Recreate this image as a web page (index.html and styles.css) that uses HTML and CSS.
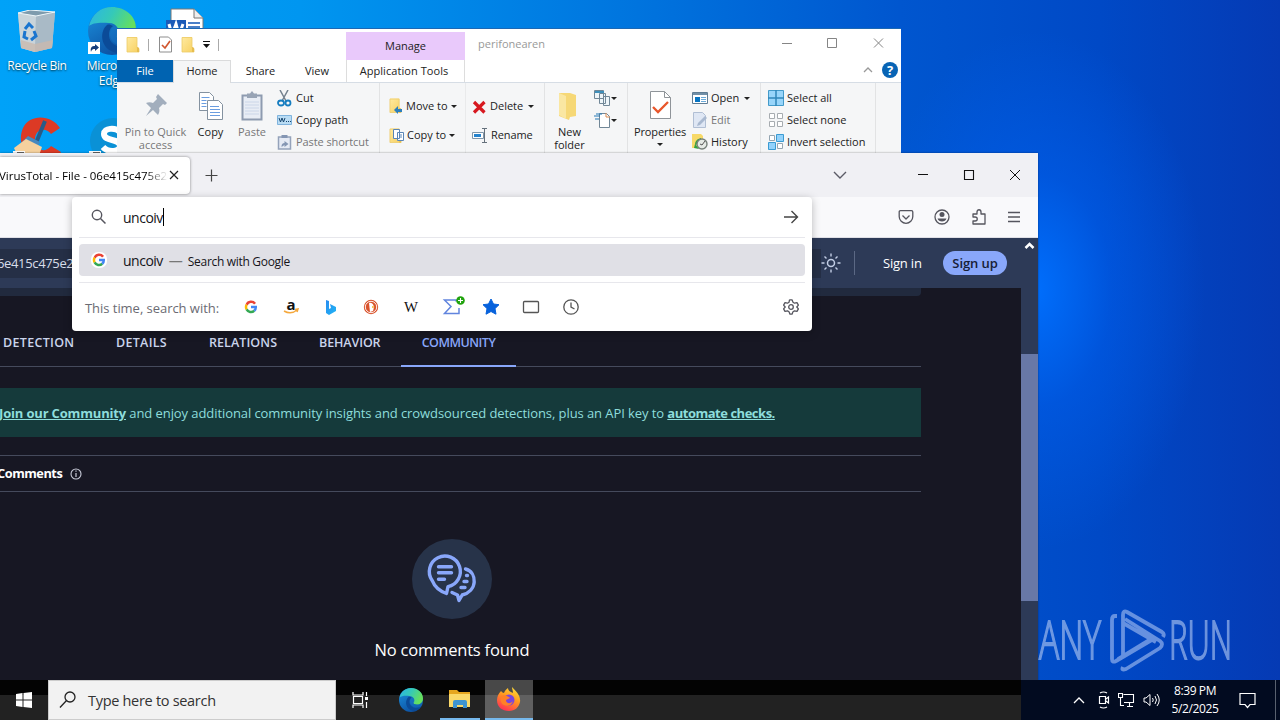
FILE: index.html
```html
<!DOCTYPE html>
<html lang="en">
<head>
<meta charset="utf-8">
<title>Desktop</title>
<link rel="stylesheet" href="styles.css">
</head>
<body>
<svg width="0" height="0" class="defs">
  <defs>
    <linearGradient id="eg1" x1="0" y1="0" x2="1" y2="0.4"><stop offset="0" stop-color="#2bb5e8"/><stop offset=".5" stop-color="#35c9b8"/><stop offset="1" stop-color="#66e05c"/></linearGradient>
    <linearGradient id="eg2" x1="0" y1="0" x2="0.6" y2="1"><stop offset="0" stop-color="#1c93e0"/><stop offset="1" stop-color="#0c4fa0"/></linearGradient>
    <linearGradient id="ff" x1=".8" y1="0" x2=".3" y2="1"><stop offset="0" stop-color="#ffe23a"/><stop offset=".45" stop-color="#ff9a1f"/><stop offset="1" stop-color="#ff2e56"/></linearGradient>
    <linearGradient id="fold" x1="0" y1="0" x2="1" y2="1"><stop offset="0" stop-color="#ffeaa0"/><stop offset="1" stop-color="#f7d060"/></linearGradient>
    <linearGradient id="bing" x1="0" y1="0" x2="1" y2="1"><stop offset="0" stop-color="#2a8cf0"/><stop offset="1" stop-color="#1fb5f5"/></linearGradient>
    <symbol id="edge" viewBox="0 0 48 48">
      <circle cx="24" cy="24" r="24" fill="url(#eg2)"/>
      <path d="M1 19C4 7 13 0 24 0c13 0 24 9 24 21 0 8-6 12-12 12-5 0-8-2-7-4 4-5 0-13-8-13C12 15 4 16 1 19Z" fill="url(#eg1)"/>
      <path d="M19 18c-7 6-7 20 4 26 8 4 16 1 21-6-10 5-22 1-23-9-.4-4 1-8 4-10-2-1-4-2-6-1Z" fill="#0b4b98"/>
      <path d="M27 19c5 3 5 8 2 11-2 2 3 4 7 3 7 0 10-3 12-6 0 4-1 7-3 10-10 5-22 1-23-9 0-4 2-8 5-9Z" fill="#1a7fd0" opacity=".35"/>
    </symbol>
    <symbol id="google" viewBox="0 0 16 16">
      <g fill="none" stroke-width="2.8"><path d="M12.6 4.2A5.6 5.6 0 0 0 3 5.3" stroke="#ea4335"/><path d="M3 5.3a5.6 5.6 0 0 0 0 5.4" stroke="#fbbc05"/><path d="M3 10.7a5.6 5.6 0 0 0 8.7 1.6" stroke="#34a853"/><path d="M11.7 12.3A5.5 5.5 0 0 0 13.5 8H8" stroke="#4285f4"/></g>
    </symbol>
    <symbol id="folder" viewBox="0 0 14 16"><path d="M1 0h10v10l2 1v4H1z" fill="url(#fold)"/><path d="M1 .5h10V11l2 .5V15H1z" fill="none" stroke="#eccb68" stroke-width=".8"/><path d="M11 10v5h2v-4z" fill="#e6bd4f"/></symbol>
  </defs>
</svg>
<main class="desktop">
  <section class="shortcuts">
    <div class="shortcut s1">
      <svg width="40" height="44" viewBox="0 0 40 44"><path d="M1 3 13 0l25 2-3 36-17 4-14-4z" fill="#b5c4ce"/><path d="M1 3 19 6l-1 36-14-4z" fill="#c9d4da"/><path d="m19 6 19-4-3 36-17 4z" fill="#a9bac6"/><path d="M1 3 13 0l25 2-19 4z" fill="#7e9bad" stroke="#eef6fa"/><path d="m4 30 14 4 18-4-1 8-17 4-14-4z" fill="#c9b9ae" opacity=".8"/><g fill="none" stroke="#1a75cf" stroke-width="3"><path d="m8 19 4-5 4 4M17 21l2 5-5 4M11 29l-4-2 1-6"/></g></svg>
      <span>Recycle Bin</span>
    </div>
    <div class="shortcut s2">
      <svg width="48" height="48"><use href="#edge" width="48" height="48"/><path d="M0 35h12v12H0z" fill="#fff"/><path d="M3 45c-1-5 1-6 4-6v-2l4 3.500-4 3.500v-2c-2 0-3 0-4 3z" fill="#153c7a"/></svg>
      <span>Microsoft<br>Edge</span>
    </div>
    <div class="shortcut s3"><svg width="40" height="46"><path d="M6 1h23l9 9v35H6z" fill="#fff" stroke="#777"/><path d="M29 1v9h9" fill="#eee" stroke="#777"/><path d="M1 12h20v22H1z" fill="#1b5bb8"/><path d="m4 16 3 11 4-11 3 11 4-11" fill="none" stroke="#fff" stroke-width="3"/><path d="M23 15h12M23 19h12" stroke="#4a7fc8" stroke-width="2"/></svg></div>
    <div class="shortcut s4"><svg width="48" height="48"><path d="M47 11C39-2 17-4 10 11 3 27 14 45 34 44c8 0 12-5 14-9l-10-6c-5 7-15 5-16-5-1-11 10-15 16-7z" fill="#dc3a25"/><path d="m32 4-9 22" stroke="#285b87" stroke-width="4"/><path d="m15 19 12 6-4 9-17-6z" fill="#4788bf"/><path d="m1 31 12-9 16 8-5 14H7z" fill="#f5d19e"/><path d="M0 34h12v12H0z" fill="#fff"/><path d="M4 36h7" stroke="#333" stroke-width="1.500"/></svg></div>
    <div class="shortcut s5"><svg width="48" height="48"><circle cx="24" cy="24" r="23" fill="#0a91d6"/><path d="M31 15c-5-5-16-4-16 2 0 8 16 4 16 12 0 6-12 7-17 1" fill="none" stroke="#fff" stroke-width="6"/><path d="M0 34h12v12H0z" fill="#fff"/><path d="M4 36h7" stroke="#333" stroke-width="1.500"/></svg></div>
  </section>

  <section class="explorer">
    <header class="ex-title">
      <div class="quick">
        <svg width="14" height="16"><use href="#folder"/></svg><i></i>
        <svg width="13" height="17" viewBox="0 0 13 17"><path d="M.5 1h9l3 3v12H.5z" fill="#fff" stroke="#8d8d8d"/><path d="m3 9 3 3 5-7" fill="none" stroke="#d1572f" stroke-width="1.700"/></svg>
        <svg width="14" height="16"><use href="#folder"/></svg>
        <svg width="7" height="7"><path d="M0 .5h7" stroke="#111"/><path d="M0 3h7L3.500 7z" fill="#111"/></svg><i></i>
      </div>
      <div class="manage">Manage</div>
      <div class="ex-name">perifonearen</div>
      <svg class="ex-controls" width="104" height="14"><g fill="none" stroke="#858585"><path d="M1 7.500h10M46.500 2.500h9v9h-9zM93 2.500l9 9m0-9-9 9"/></g></svg>
    </header>
    <nav class="ex-tabs">
      <div class="file">File</div><div class="home">Home</div><div class="share">Share</div><div class="view">View</div><div class="apptools">Application Tools</div>
      <svg class="help" width="36" height="18"><path d="m1 11 4-4 4 4" fill="none" stroke="#999" stroke-width="1.300"/><circle cx="27" cy="9" r="8" fill="#0864b5"/><text x="27" y="14" text-anchor="middle" class="q">?</text></svg>
    </nav>
    <div class="ribbon">
      <div class="group g-clip">
        <div class="big pin dim"><svg width="24" height="26" viewBox="0 0 24 26"><path d="m14 1 9 9-2 2-2-1-4 4c1 3 0 5-1 7l-5-5-7 6 5-8-5-5c2-1 5-1 7 0l4-4-1-2z" fill="#a2aebd"/></svg><span>Pin to Quick<br>access</span></div>
        <div class="big copy"><svg width="26" height="30" viewBox="0 0 26 30"><g fill="#fff" stroke="#8492a0"><path d="M1.500 1.500h10l4 4v14h-14z"/><path d="M9.500 9.500h11l4 4v15h-15z"/></g><path d="M3.500 6.500h8m-8 3h5m-5 3h5m-5 3h5m3.500 0h9m-9 3h10m-10 3h10m-10 3h10" stroke="#6a9de0"/></svg><span>Copy</span></div>
        <div class="big paste dim"><svg width="22" height="30" viewBox="0 0 22 30"><path d="M1.500 4.500h19v24h-19z" fill="#e8edf5" stroke="#8e9bb0" stroke-width="2"/><path d="M6 2.500h3L11 0l2 2.500h3V7H6z" fill="#98a4b5"/><path d="M4 11h14M4 14h14M4 17h14M4 20h14M4 23h14" stroke="#cbd6e8"/></svg><span>Paste</span></div>
        <div class="stack clip">
          <div><svg width="15" height="17" viewBox="0 0 15 17"><path d="m3 0 6 11M11 0 5 11" stroke="#73818e" stroke-width="1.500"/><g fill="none" stroke="#167dc0" stroke-width="1.800"><ellipse cx="4" cy="13" rx="3" ry="2.500"/><ellipse cx="11" cy="13" rx="2.500" ry="2.500"/></g></svg><span>Cut</span></div>
          <div><svg width="15" height="11"><path d="M.5.5h14v9H.5z" fill="#b9dcf4" stroke="#7fb3dd"/><path d="m2 3 1.500 4L5 3l1.500 4L8 3m1 3.500h1m1 0h1m1 0h1" fill="none" stroke="#17456d"/></svg><span>Copy path</span></div>
          <div class="dim"><svg width="14" height="15" viewBox="0 0 14 15"><path d="M1 2h12v12H1z" fill="#e5eaf4" stroke="#94a2ba" stroke-width="1.500"/><path d="M4 0h6v3H4zM4 12c0-3 1-4 3-4V6l4 3-4 3v-2z" fill="#8496b3"/></svg><span class="ps">Paste shortcut</span></div>
        </div>
      </div>
      <div class="group g-org">
        <div class="pair p1">
          <div><svg width="14" height="17"><use href="#folder" width="13" height="16"/><path d="m5 12 4-4v3h4v3H9v2z" fill="#2c7fbd"/></svg><span>Move to</span><b></b></div>
          <div><svg width="15" height="16"><use href="#folder" width="13" height="16"/><path d="M4.500 1.500h6v9h-6zM8.500 4.500h6v8h-6z" fill="#fff" stroke="#5a86b7"/><path d="M10 7h3m-3 2h3" stroke="#5a86b7"/></svg><span class="ct">Copy to</span><b></b></div>
        </div>
        <div class="pair p2">
          <div><svg width="15" height="14"><path d="m2 2 10.500 10.500M12.500 2 2 12.500" stroke="#d71920" stroke-width="3.200"/></svg><span>Delete</span><b class="wide"></b></div>
          <div><svg width="16" height="15"><path d="M.5 4.500h11v6H.5z" fill="#fff" stroke="#7f96a9"/><path d="M2 6h7v3H2z" fill="#2684ce"/><path d="M10 .5h5m-2.500 0v14M10 14.500h5" fill="none" stroke="#65717c"/></svg><span class="rn">Rename</span></div>
        </div>
      </div>
      <div class="group g-new">
        <div class="big newf"><svg width="20" height="30" viewBox="0 0 20 30"><path d="M1 2h11l6 2v21l-6 1-1 3-10-4z" fill="#f6d876"/><path d="m1 2 7 3v23l-7-4z" fill="#fae7a2"/></svg><span>New<br>folder</span></div>
        <div class="minis">
          <div><svg width="17" height="16"><path d="M.5.500h9v8h-9zM5.500 3.500h6v10h-6zM9.500 6.500h6v9h-6z" fill="#eef5f9" stroke="#718797"/><path d="M1 1h9v2H1z" fill="#3e90bb"/></svg><b></b></div>
          <div><svg width="17" height="16"><path d="M5.500 1.500h7l3 3v11h-10z" fill="#fff" stroke="#718797"/><path d="M0 4h6M2 2h6M1 7h4" stroke="#2479b5"/><path d="M12 1v4h4" fill="none" stroke="#d98a50"/></svg><b></b></div>
        </div>
      </div>
      <div class="group g-open">
        <div class="big props"><svg width="23" height="29" viewBox="0 0 23 29"><path d="M1.500.5h14l6 6v21h-20z" fill="#fff" stroke="#8f9499"/><path d="M15.500.500v6h6" fill="none" stroke="#8f9499"/><path d="m4 16 5 5L19 11" fill="none" stroke="#e8562b" stroke-width="2.300"/></svg><span>Properties</span><b></b></div>
        <div class="stack op">
          <div><svg width="16" height="13"><path d="M.5.5h15v11H.5z" fill="#fff" stroke="#607d94"/><path d="M1 1h14v2H1z" fill="#718fa7"/><path d="M3 5h5v5H3z" fill="#0875c3"/><path d="M9 5.500h5m-5 2h5m-5 2h5" stroke="#6aaad9"/></svg><span>Open</span><b class="wide"></b></div>
          <div class="dim"><svg width="15" height="16"><path d="M1.500.5h9l3 3v12h-12z" fill="#dfe7f4" stroke="#b1bfd4"/><path d="m5 14 1-3 7-7 2 2-7 7z" fill="#a9b9d0"/></svg><span>Edit</span></div>
          <div><svg width="16" height="16"><path d="M0 0h9l2 2v12H0z" fill="#f7d968"/><path d="M3 11c0-4 2-6 6-7v5z" fill="#32a042"/><circle cx="10" cy="10" r="5" fill="#e5eae5" stroke="#76807a" stroke-width="1.400"/><path d="M10 11l3-4M10 11l-2-1" fill="none" stroke="#555"/><path d="m3 10 4 5-5-1z" fill="#32a042"/></svg><span>History</span></div>
        </div>
      </div>
      <div class="group g-sel">
        <div class="stack sel">
          <div><svg width="16" height="16"><path d="M.5.5h15v15H.5z" fill="#98d5fa" stroke="#439ac9"/><path d="M8 0v16M0 8h16" stroke="#2f87ba" stroke-width="1.500"/></svg><span>Select all</span></div>
          <div><svg width="16" height="16"><path d="M1.500 1.500h5v5h-5zm8 0h5v5h-5zm-8 8h5v5h-5zm8 0h5v5h-5z" fill="#fff" stroke="#a7acb0"/></svg><span>Select none</span></div>
          <div><svg width="16" height="16"><path d="M1.500 1.500h5v5h-5zm8 8h5v5h-5z" fill="#fff" stroke="#94a5b1"/><path d="M8.500.5h7v7h-7zm-8 8h7v7h-7z" fill="#93d2fb" stroke="#3a9bd2"/></svg><span>Invert selection</span></div>
        </div>
      </div>
    </div>
  </section>

  <section class="firefox">
    <header class="tabbar">
      <div class="tab"><span class="tab-title">VirusTotal - File - 06e415c475e24</span><svg width="10" height="10"><path d="m1 1 8 8m0-8-8 8" stroke="#222" stroke-width="1.200"/></svg></div>
      <svg class="plus" width="13" height="13"><path d="M6.500.500v12M.5 6.500h12" stroke="#444" stroke-width="1.200"/></svg>
      <svg class="chev" width="14" height="8"><path d="m1 1 6 6 6-6" fill="none" stroke="#5b5b66" stroke-width="1.400"/></svg>
      <svg class="winctl" width="104" height="12"><path d="M0 5.500h10M46.500 1.500h9v9h-9z" fill="none" stroke="#111" stroke-width="1.100"/><path d="m92 1 10 10m0-10L92 11" stroke="#111"/></svg>
    </header>
    <div class="toolbar">
      <svg width="16" height="16" viewBox="0 0 16 16"><path d="M2.500 1.700h11q1.300 0 1.300 1.300v4.500a6.800 6.800 0 0 1-13.600 0V3q0-1.300 1.300-1.300zM4.500 6.500 8 10l3.500-3.500" fill="none" stroke="#55555e" stroke-width="1.300" stroke-linejoin="round"/></svg>
      <svg width="16" height="16" viewBox="0 0 16 16"><circle cx="8" cy="8" r="7" fill="none" stroke="#55555e" stroke-width="1.300"/><circle cx="8" cy="5.500" r="2.500" fill="#55555e"/><path d="M3.500 9.500h9c-1 4-8 4-9 0z" fill="#55555e"/></svg>
      <svg width="16" height="16" viewBox="0 0 16 16"><path d="M2 5h4V3c0-3 4-3 4 0v2h4v10H2v-3h2c3 0 3-4 0-4H2z" fill="none" stroke="#55555e" stroke-width="1.300" stroke-linejoin="round"/></svg>
      <svg width="14" height="14"><path d="M1 2.500h12M1 7h12M1 11.500h12" stroke="#55555e" stroke-width="1.300"/></svg>
    </div>
    <div class="viewport">
      <div class="page">
        <header class="vt-head">
          <div class="vt-search">6e415c475e2</div>
          <svg class="sun" width="20" height="20" viewBox="0 0 20 20"><circle cx="10" cy="10" r="3.500" fill="none" stroke="#c3cee5" stroke-width="1.500"/><path d="M10 .5v3m0 13v3M.5 10h3m13 0h3M3.500 3.500l2 2m9 9 2 2m0-13-2 2m-9 9-2 2" stroke="#c3cee5" stroke-width="1.400"/></svg>
          <i class="vt-div"></i><span class="signin">Sign in</span><span class="signup">Sign up</span>
        </header>
        <div class="cardend"></div>
        <nav class="vt-tabs"><span class="t1">DETECTION</span><span class="t2">DETAILS</span><span class="t3">RELATIONS</span><span class="t4">BEHAVIOR</span><span class="t5">COMMUNITY</span></nav>
        <div class="banner"><p><u class="j1">Join our Community</u><span class="j2"> and enjoy additional community insights and crowdsourced detections, plus an API key to </span><u class="j3">automate checks.</u></p></div>
        <div class="comments"><span>Comments</span><svg width="12" height="12"><circle cx="6" cy="6" r="5" fill="none" stroke="#c8cbd8" stroke-width="1.100"/><path d="M6 5v4M6 2.500v1.300" stroke="#c8cbd8" stroke-width="1.200"/></svg></div>
        <div class="empty">
          <svg width="80" height="80"><circle cx="40" cy="40" r="40" fill="#273349"/><g fill="none" stroke="#89a7fa" stroke-width="3.400" stroke-linejoin="round" stroke-linecap="round"><path d="M34.500 54.500C27 52 22.500 47.500 20 41.200A15.500 15.500 0 1 1 36 47.700z"/><path d="M53.500 30c6 1.500 9 7 8.700 13-.3 6-5 11-12 13L47 61.500 45.500 56 40 53.500"/><path d="M26.500 27.700h13M26.500 33.700h13M26.500 40.300h6M54.500 36.500h1M52 42.500h3M49 48.500h4"/></g></svg>
          <span>No comments found</span>
        </div>
      </div>
      <div class="scroll"><svg width="17" height="16"><path d="m4.500 10 4-4 4 4" fill="none" stroke="#fff" stroke-width="2.500"/></svg><div class="thumb"></div></div>
    </div>
    <div class="urlbar">
      <div class="u-input"><svg width="16" height="16"><circle cx="6" cy="6" r="4.700" fill="none" stroke="#55555e" stroke-width="1.400"/><path d="m9.500 9.500 5 5" stroke="#55555e" stroke-width="1.500"/></svg><span>uncoiv</span><i></i><svg class="go" width="16" height="14"><path d="M1 7h13M8.500 1l6 6-6 6" fill="none" stroke="#444" stroke-width="1.400"/></svg></div>
      <div class="u-result"><div class="gbox"><svg width="14" height="14"><use href="#google"/></svg></div><span class="r1">uncoiv</span><span class="dash">—</span><span class="r2">Search with Google</span></div>
      <div class="u-engines"><span>This time, search with:</span>
        <div class="engines">
          <svg width="20" height="20"><use href="#google" x="3" y="3" width="14" height="14"/></svg>
          <svg width="20" height="20"><text x="10" y="13" text-anchor="middle" class="amz">a</text><path d="M3 14q7 4 13-1m-2-.5 3-.5-1 3" fill="none" stroke="#f5a83c" stroke-width="1.500"/></svg>
          <svg width="20" height="20"><path d="m5 3 3 1v8l2-1-1-4 6 3v4l-7 4-3-2z" fill="url(#bing)"/></svg>
          <svg width="20" height="20"><circle cx="10" cy="10" r="7.200" fill="#d9532c"/><circle cx="10" cy="10" r="5.700" fill="none" stroke="#fff" stroke-width=".9"/><path d="M8 6c4-1 6 3 4 8l-3 1z" fill="#fff"/><path d="m11 9 3 1-3 1z" fill="#f8ba2d"/></svg>
          <svg width="20" height="20"><text x="10" y="15" text-anchor="middle" textLength="14" lengthAdjust="spacingAndGlyphs" class="wiki">W</text></svg>
          <svg width="22" height="20" viewBox="0 0 22 20"><path d="M15 4.500V3H3.500L10 9.500 3.500 16.500H18V11" fill="none" stroke="#6185de" stroke-width="1.500"/><circle cx="19.500" cy="3.500" r="4.300" fill="#20a30d"/><path d="M19.500 1v5m-2.500-2.500h5" stroke="#fff" stroke-width="1.100"/></svg>
          <svg width="20" height="20"><path d="m10 2 2.500 5 5.500.700-4 3.900 1 5.600-5-2.700-5 2.700 1-5.600-4-3.900 5.500-.700z" fill="#0762dc" stroke="#0762dc" stroke-linejoin="round"/></svg>
          <svg width="20" height="20"><rect x="2.500" y="4.500" width="15" height="11" rx="1" fill="none" stroke="#555" stroke-width="1.300"/></svg>
          <svg width="20" height="20"><circle cx="10" cy="10" r="7.200" fill="none" stroke="#555" stroke-width="1.300"/><path d="M10 5.500V10l3.500 2" fill="none" stroke="#555" stroke-width="1.300"/></svg>
        </div>
        <svg class="gear" width="16" height="16" viewBox="0 0 16 16"><path d="m6.500 1 .5-.2h2l1 2.500 1.500.9 2.500-.500 1.400 2.400L13.800 8l1.600 1.900-1.400 2.400-2.500-.5-1.500.9-1 2.500H7l-1-2.500-1.500-.9-2.500.5L.6 9.900 2.200 8 .6 6.100 2 3.700l2.500.5L6 3.300z" fill="none" stroke="#55555e" stroke-width="1.300" stroke-linejoin="round"/><circle cx="8" cy="8" r="2.300" fill="none" stroke="#55555e" stroke-width="1.300"/></svg>
      </div>
    </div>
  </section>

  <svg class="anyrun" width="210" height="90" viewBox="-4 -12 210 90">
    <text x="0" y="52" textLength="62" lengthAdjust="spacingAndGlyphs">ANY</text>
    <g fill="none" stroke-width="3.800" stroke-linejoin="round"><path d="M78 9h-2q-3 0-3 4v39q0 4 4 2l39-23"/><path d="M84 49V8q0-5 4-3l35 20q3 2 1 5M84 16l33 19M79 52l36-22M84 60q-2 4 3 2l34-21q4-4 0-7L86 12"/></g>
    <text x="130" y="52" textLength="63" lengthAdjust="spacingAndGlyphs">RUN</text>
  </svg>

  <footer class="taskbar">
    <div class="start"><svg width="16" height="16"><path d="m0 2 6.500-1v6.500H0zM7.500.9 16 0v7.500H7.500zM0 8.500h6.500V15L0 14zM7.500 8.500H16V16l-8.500-1z" fill="#fff"/></svg></div>
    <div class="t-search"><svg width="18" height="18"><circle cx="11" cy="6" r="5" fill="none" stroke="#222" stroke-width="1.300"/><path d="m7.500 9.500-6.500 7" stroke="#222" stroke-width="1.300"/></svg><span>Type here to search</span></div>
    <div class="app"><svg width="17" height="16"><path d="M1 0v3h10V0M1 16v-3h10v3M1.500 4.500h9v7h-9zM14.500 0v4m0 6v6" fill="none" stroke="#fff" stroke-width="1.200"/><path d="M13 5h3v3h-3z" fill="#fff"/></svg></div>
    <div class="app edge"><svg width="24" height="24"><use href="#edge" width="24" height="24"/></svg></div>
    <div class="app files"><svg width="22" height="18"><path d="M0 0h8l2 2h11v5H0z" fill="#e6a61f"/><path d="M0 4h21v13H0z" fill="#fbd969"/><path d="M4 18v-6q0-2 2-2h10q2 0 2 2v6h-4v-3H8v3z" fill="#3f94d0"/></svg></div>
    <div class="app fox"><svg width="24" height="24"><path d="M4 4c1 1 2 2 3 2 1-3 3-4 4-5 0 3 3 4 5 5 0-2-1-4-1-6 4 4 9 9 8 15-1 5-5 9-11 9C5 24 0 20 0 13c0-4 2-7 4-9z" fill="url(#ff)"/><circle cx="12" cy="13" r="5.500" fill="#7946dc"/><path d="M4 9c4-2 7 0 9 2l-4 2c0 4 5 4 7 1-1 4-5 6-9 4-3-1-4-5-3-9z" fill="#ff8027"/></svg></div>
    <div class="tray">
      <svg width="12" height="8"><path d="m1 7 5-5 5 5" fill="none" stroke="#fff" stroke-width="1.300"/></svg>
      <svg class="cam" width="13" height="18"><path d="M2.500 5.500h6v7h-6zM9 8l2.500-2v6L9 10M3 2q3.500-2 7 0M3 16q3.500 2 7 0" fill="none" stroke="#fff" stroke-width="1.200"/></svg>
      <svg width="17" height="16"><path d="M5.500 2.500h10v8H6M9 14.500h6M11.500 11v3M.5 1.500h4v4h-4zM2.500 6v7.500H6" fill="none" stroke="#fff" stroke-width="1.100"/></svg>
      <svg width="17" height="14"><path d="M1 5h2l4-3.500v11L3 9H1z" fill="none" stroke="#fff"/><path d="M9.500 5q1.500 2 0 4M12 3q3 4 0 8M14 1q4.500 6 0 12" fill="none" stroke="#fff"/></svg>
      <div class="clock"><span class="c1">8:39 PM</span><span class="c2">5/2/2025</span></div>
      <svg class="notif" width="17" height="17"><path d="M1 1.500h15v11h-5l-2.500 3-2.500-3H1z" fill="none" stroke="#fff" stroke-width="1.200"/></svg>
      <i></i>
    </div>
  </footer>
</main>
</body>
</html>
```
FILE: styles.css
```css
* { box-sizing: border-box; }
body { margin: 0; overflow: hidden; font-family: "Open Sans", "Noto Sans", sans-serif; }
svg { display: block; flex: none; }
.defs { position: absolute; }
span, u { white-space: nowrap; }
.desktop {
  position: relative; width: 1280px; height: 720px; overflow: hidden;
  background:
    radial-gradient(ellipse 170px 260px at 1035px 290px, rgba(0,112,255,.95), rgba(0,98,245,.45) 45%, transparent),
    linear-gradient(90deg, #00a2f8 0, #0096f0 300px, #0076df 620px, #0056cf 900px, #0049c6 1100px, #053ab4 1280px);
}
.shortcut { position: absolute; display: flex; flex-direction: column; align-items: center; color: #fff; font-size: 12px; line-height: 15px; text-align: center; text-shadow: 0 1px 2px #034; }
.s1 { left: 0; top: 10px; width: 74px; gap: 4px; }
.s1 span { letter-spacing: -.3px; }
.s2 { left: 76px; top: 7px; width: 72px; gap: 3px; letter-spacing: -.25px; }
.s3 { left: 165px; top: 8px; }
.s4 { left: 13px; top: 117px; }
.s5 { left: 89px; top: 117px; }

.explorer { position: absolute; left: 117px; top: 28px; width: 784px; height: 130px; background: #fff; border-top: 1px solid #1c68b4; font-size: 11px; color: #222; }
.ex-title { display: flex; height: 31px; }
.quick { display: flex; align-items: center; width: 229px; padding-left: 9px; }
.quick i { width: 1px; height: 12px; background: #aaa; margin: 0 10px 0 8px; }
.quick svg + svg { margin-left: 9px; }
.quick svg:nth-of-type(4) { margin-left: 8px; }
.manage { width: 119px; height: 28px; margin-top: 3px; padding-bottom: 1px; background: #e9c9fb; display: flex; align-items: center; justify-content: center; }
.ex-name { color: #999; padding: 7px 0 0 13px; width: 316px; }
.ex-controls { margin-top: 7px; }
.ex-tabs { display: flex; height: 23px; text-align: center; line-height: 22px; border-bottom: 1px solid #d6dde5; }
.file { background: #0063b1; color: #fff; width: 56px; }
.home { width: 58px; height: 23px; background: #f5f6f7; border: 1px solid #dadbdc; border-width: 1px 1px 0; line-height: 20px; }
.share { width: 59px; } .view { width: 56px; padding-right: 2px; }
.apptools { width: 119px; border: 1px solid #ddd; border-width: 0 1px; padding-right: 3px; letter-spacing: .06px; }
.help { margin: 1px 0 0 398px; }
.q { fill: #fff; font: bold 13px "Open Sans"; }
.ribbon { display: flex; height: 76px; background: #f5f6f7; line-height: 13px; }
.group { display: flex; border-right: 1px solid #e2e3e4; height: 72px; }
.dim { color: #777; }
.big { display: flex; flex-direction: column; align-items: center; text-align: center; padding-top: 8px; }
.big span { margin-top: 4px; }
.big b, .stack b, .pair b, .minis b { border: 3px solid transparent; border-top-color: #222; border-bottom: 0; }
.stack b.wide, .pair b.wide { margin-left: 2px; }
.stack div, .pair div { display: flex; align-items: center; }
.stack { padding-top: 4px; } .stack div { height: 22px; gap: 4px; }
.stack span, .pair span { padding-bottom: 2px; }
.g-clip { width: 263px; }
.pin { width: 77px; padding-top: 10px; } .pin span { margin-top: 6px; }
.copy { width: 33px; } .paste { width: 50px; }
.clip svg { width: 15px; }
.ps { letter-spacing: -.08px; }
.g-org { width: 165px; }
.pair { padding-top: 9px; } .pair div { height: 29px; gap: 3px; }
.p1 { width: 86px; padding-left: 9px; border-right: 1px solid #e9eaeb; } .p2 { padding-left: 6px; }
.rn { letter-spacing: -.1px; }
.g-new { width: 83px; } .newf { width: 49px; } .newf svg { margin-left: -3px; }
.minis { padding-top: 4px; } .minis div { display: flex; align-items: center; height: 22px; gap: 0; }
.g-open { width: 133px; } .props { width: 64px; } .props b { margin-top: 5px; } .props span { margin-top: 5px; letter-spacing: -.1px; }
.g-sel { width: 115px; padding-left: 7px; }
.op svg { width: 16px; } .op div, .sel div { gap: 3px; }

.firefox { position: absolute; left: 0; top: 153px; width: 1038px; height: 567px; background: #171723; box-shadow: 0 0 2px #0006; }
.tabbar { height: 44px; background: #f0f0f4; display: flex; align-items: center; }
.tab { width: 190px; height: 37px; background: #fff; border-radius: 0 4px 4px 0; box-shadow: 0 0 3px #0007; display: flex; align-items: center; font-size: 11.5px; }
.tab-title { width: 169px; overflow: hidden; text-indent: -1px; letter-spacing: -.02px; -webkit-mask-image: linear-gradient(90deg, #000 145px, transparent 168px); }
.plus { margin-left: 15px; } .chev { margin-left: 615px; } .winctl { margin-left: 71px; }
.toolbar { height: 41px; background: #f9f9fb; border-bottom: 1px solid #e0e0e6; display: flex; align-items: center; justify-content: flex-end; gap: 20.500px; padding-right: 17px; }
.viewport { display: flex; height: 482px; }
.page { width: 1021px; color: #cbd5ec; }
.vt-head { height: 50px; background: #2d3a57; display: flex; align-items: center; }
.vt-search { width: 821px; height: 29px; background: #252f46; color: #d8deea; font-size: 13px; line-height: 29px; text-indent: -3px; letter-spacing: -.35px; overflow: hidden; }
.vt-div { width: 1px; height: 24px; background: #5b6884; margin-left: 13px; }
.signin { color: #fff; font-size: 13px; margin-left: 28px; width: 60px; letter-spacing: -.2px; }
.signup { width: 64px; height: 24px; border-radius: 12px; background: #89a7fa; color: #172036; font-size: 13px; font-weight: 600; text-align: center; line-height: 24px; letter-spacing: -.1px; }
.cardend { width: 921px; height: 8px; background: #212a3e; border-radius: 0 0 4px 0; }
.vt-tabs { display: flex; width: 921px; height: 71px; border-bottom: 1px solid #454a5c; padding-top: 38px; font-size: 12.500px; font-weight: 600; line-height: 17px; }
.t1 { width: 116px; padding-left: 3px; letter-spacing: .32px; } .t2 { width: 93px; letter-spacing: .3px; } .t3 { width: 110px; letter-spacing: .08px; } .t4 { width: 82px; letter-spacing: -.1px; }
.t5 { width: 115px; height: 33px; text-align: center; color: #89a7fa; border-bottom: 2px solid #89a7fa; letter-spacing: -.5px; }
.banner { width: 921px; height: 49px; margin-top: 21px; background: #153a3b; color: #8edddb; font-size: 13px; display: flex; align-items: center; }
.banner p { margin: 1px 0 0 -1px; white-space: pre; }
.banner u { font-weight: 700; }
.banner span { white-space: pre; }
.j1 { letter-spacing: -.17px; } .j2 { letter-spacing: -.08px; } .j3 { letter-spacing: -.48px; }
.comments { width: 921px; height: 37px; margin-top: 18px; border: 1px solid #454a5c; border-width: 1px 0; display: flex; align-items: center; gap: 8px; color: #fff; font-size: 13px; font-weight: 600; }
.comments span { margin-left: -3px; letter-spacing: -.47px; padding-bottom: 1px; font-weight: 700; font-size: 12.800px; }
.empty { width: 904px; padding-top: 47px; display: flex; flex-direction: column; align-items: center; gap: 19px; color: #fff; font-size: 16.500px; line-height: 24px; letter-spacing: -.2px; }
.scroll { width: 17px; background: #2d3a57; display: flex; flex-direction: column; gap: 100px; }
.thumb { height: 247px; background: #6878a6; }

.urlbar { position: absolute; left: 72px; top: 44px; width: 740px; height: 134px; background: #fff; border-radius: 4px; box-shadow: 0 2px 8px #0004; padding: 0 7px; color: #15141a; }
.u-input { height: 41px; display: flex; align-items: center; border-bottom: 1px solid #e7e7ec; padding: 0 6px 0 12px; font-size: 14px; }
.u-input span { margin-left: 16px; letter-spacing: -.5px; padding-top: 1px; }
.u-input i { width: 1px; height: 18px; background: #000; }
.go { margin-left: auto; }
.u-result { height: 32px; margin-top: 6px; background: #e0e0e6; border-radius: 4px; display: flex; align-items: center; font-size: 14px; padding-left: 12px; }
.gbox { background: #fff; border-radius: 7px; padding: 1px; }
.r1 { margin-left: 16px; letter-spacing: -.5px; } .dash { margin: 0 5px 0 6px; color: #777; } .r2 { font-size: 12px; letter-spacing: -.31px; padding-top: 2px; }
.u-engines { margin-top: 6px; border-top: 1px solid #e7e7ec; height: 49px; padding: 0 6px 0; display: flex; align-items: center; font-size: 13px; color: #6b6b73; }
.u-engines > span { width: 156px; padding-top: 1px; letter-spacing: -.04px; }
.engines { display: grid; grid-template-columns: repeat(9, 40px); }
.engines svg { overflow: visible; }
.gear { margin-left: auto; }
.amz { font: bold 15px/1 "Open Sans"; fill: #111; } .wiki { font: 15px "Liberation Serif"; fill: #111; }

.anyrun { position: absolute; left: 1035px; top: 595px; opacity: .65; }
.anyrun text { font: 300 53px "Open Sans"; fill: #a9c2f0; stroke: #a9c2f0; stroke-width: 1.800px; }
.anyrun g { stroke: #9cb9f0; }

.taskbar { position: absolute; left: 0; top: 680px; width: 1280px; height: 40px; display: flex; background: linear-gradient(90deg, transparent 1021px, #020b20 1021px), linear-gradient(#030303 15px, #222 15px); color: #fff; }
.start { width: 48px; display: grid; place-items: center; }
.t-search { width: 288px; background: #f2f2f2; border: 1px solid #ccc; display: flex; align-items: center; gap: 11px; padding-left: 10px; font-size: 14.5px; letter-spacing: -.3px; color: #333; }
.app { width: 48px; display: grid; place-items: center; }
.t-search span { padding-top: 1px; }
.edge { width: 52px; padding-left: 2px; }
.files { border-bottom: 2px solid #76b9ed; width: 40px; margin: 0 5px 0 4px; }
.fox { background: linear-gradient(#484848 15px, #606060 15px); border-bottom: 2px solid #76b9ed; }
.tray { margin-left: auto; display: flex; align-items: center; font-size: 12px; }
.tray svg + svg { margin-left: 8px; }
.tray .cam { margin-left: 12px; }
.clock { width: 74px; padding-right: 4px; display: flex; flex-direction: column; align-items: center; line-height: 18px; letter-spacing: -.4px; }
.tray .notif { margin-left: 5px; }
.tray i { width: 1px; height: 40px; background: #59616f; margin: 0 4px 0 19px; }
```
